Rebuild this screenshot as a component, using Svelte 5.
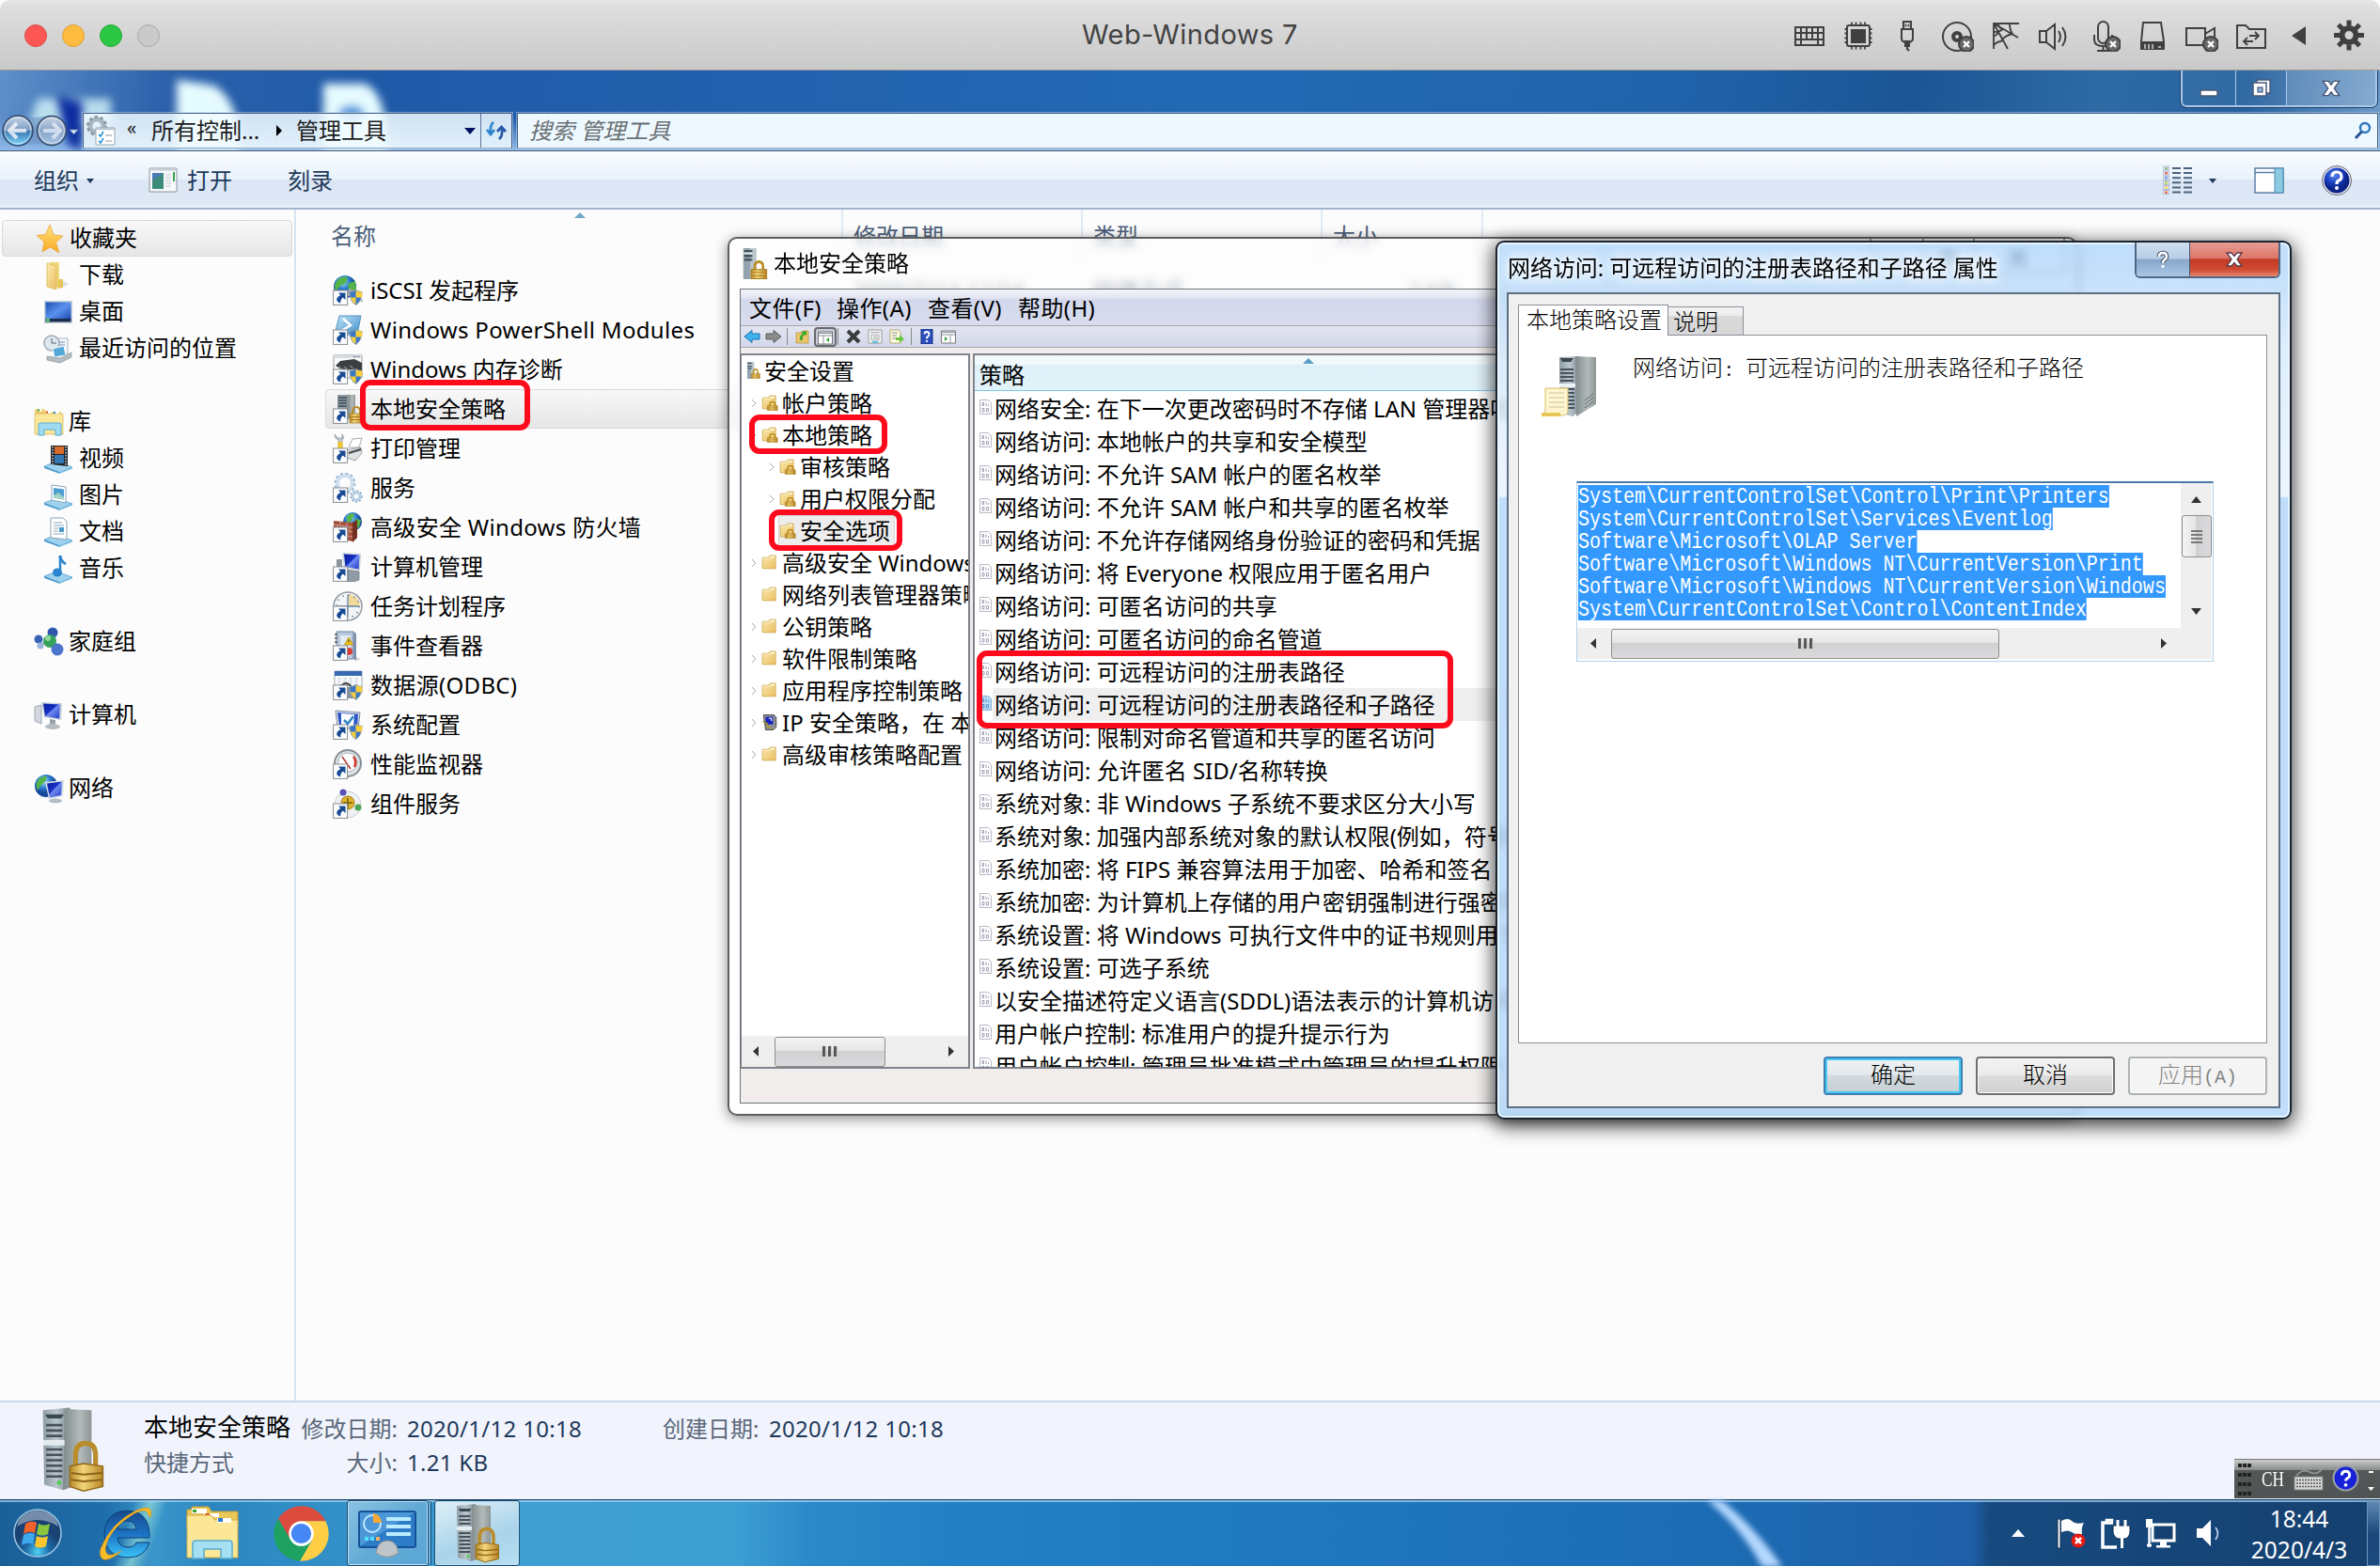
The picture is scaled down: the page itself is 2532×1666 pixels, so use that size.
<script>
  const macIcons = ['keyboard', 'chip', 'usb', 'disc', 'net', 'speaker', 'mic', 'disk', 'cam', 'share', 'tri', 'gear'];

  const nav = [
    { t: '收藏夹', i: 'star', root: true, sel: true },
    { t: '下载', i: 'download' },
    { t: '桌面', i: 'desktop' },
    { t: '最近访问的位置', i: 'recent' },
    null,
    { t: '库', i: 'library', root: true },
    { t: '视频', i: 'video' },
    { t: '图片', i: 'picture' },
    { t: '文档', i: 'document' },
    { t: '音乐', i: 'music' },
    null,
    { t: '家庭组', i: 'homegroup', root: true },
    null,
    { t: '计算机', i: 'computer', root: true },
    null,
    { t: '网络', i: 'network', root: true }
  ];

  const files = [
    { t: 'iSCSI 发起程序', i: 'globe', shield: true, d: '2009/7/14 12:54', k: '快捷方式', s: '2 KB' },
    { t: 'Windows PowerShell Modules', i: 'ps', shield: true, wide: true },
    { t: 'Windows 内存诊断', i: 'memory', shield: true },
    { t: '本地安全策略', i: 'secpol', sel: true },
    { t: '打印管理', i: 'print' },
    { t: '服务', i: 'gears' },
    { t: '高级安全 Windows 防火墙', i: 'firewall', wide: true },
    { t: '计算机管理', i: 'pcmanage' },
    { t: '任务计划程序', i: 'clock' },
    { t: '事件查看器', i: 'event' },
    { t: '数据源(ODBC)', i: 'odbc', shield: true, wide: true },
    { t: '系统配置', i: 'config', shield: true },
    { t: '性能监视器', i: 'perf' },
    { t: '组件服务', i: 'component' }
  ];

  const tree = [
    { t: '安全设置', i: 'server-lock', l: 0 },
    { t: '帐户策略', i: 'folder-lock', l: 1, a: true },
    { t: '本地策略', i: 'folder-lock', l: 1, a: true },
    { t: '审核策略', i: 'folder-lock', l: 2, a: true },
    { t: '用户权限分配', i: 'folder-lock', l: 2, a: true },
    { t: '安全选项', i: 'folder-lock', l: 2, sel: true },
    { t: '高级安全 Windows 防火墙', i: 'folder', l: 1, a: true },
    { t: '网络列表管理器策略', i: 'folder', l: 1 },
    { t: '公钥策略', i: 'folder', l: 1, a: true },
    { t: '软件限制策略', i: 'folder', l: 1, a: true },
    { t: '应用程序控制策略', i: 'folder', l: 1, a: true },
    { t: 'IP 安全策略，在 本地计算机', i: 'ipsec', l: 1, a: true },
    { t: '高级审核策略配置', i: 'folder', l: 1, a: true }
  ];

  const policies = [
    '网络安全: 在下一次更改密码时不存储 LAN 管理器哈希值',
    '网络访问: 本地帐户的共享和安全模型',
    '网络访问: 不允许 SAM 帐户的匿名枚举',
    '网络访问: 不允许 SAM 帐户和共享的匿名枚举',
    '网络访问: 不允许存储网络身份验证的密码和凭据',
    '网络访问: 将 Everyone 权限应用于匿名用户',
    '网络访问: 可匿名访问的共享',
    '网络访问: 可匿名访问的命名管道',
    '网络访问: 可远程访问的注册表路径',
    '网络访问: 可远程访问的注册表路径和子路径',
    '网络访问: 限制对命名管道和共享的匿名访问',
    '网络访问: 允许匿名 SID/名称转换',
    '系统对象: 非 Windows 子系统不要求区分大小写',
    '系统对象: 加强内部系统对象的默认权限(例如，符号链接)',
    '系统加密: 将 FIPS 兼容算法用于加密、哈希和签名',
    '系统加密: 为计算机上存储的用户密钥强制进行强密钥保护',
    '系统设置: 将 Windows 可执行文件中的证书规则用于软件',
    '系统设置: 可选子系统',
    '以安全描述符定义语言(SDDL)语法表示的计算机访问限制',
    '用户帐户控制: 标准用户的提升提示行为',
    '用户帐户控制: 管理员批准模式中管理员的提升权限'
  ];

  const paths = [
    'System\\CurrentControlSet\\Control\\Print\\Printers',
    'System\\CurrentControlSet\\Services\\Eventlog',
    'Software\\Microsoft\\OLAP Server',
    'Software\\Microsoft\\Windows NT\\CurrentVersion\\Print',
    'Software\\Microsoft\\Windows NT\\CurrentVersion\\Windows',
    'System\\CurrentControlSet\\Control\\ContentIndex'
  ];
</script>

{#snippet badge()}
  <circle cx="28" cy="28" r="8" fill="#6a6a6a" />
  <path d="M25 25l6 6M31 25l-6 6" stroke="#fff" stroke-width="2.4" />
{/snippet}

{#snippet macIcon(n)}
  <svg class="mi" viewBox="0 0 36 36" fill="none" stroke="#404040" stroke-width="2">
    {#if n === 'keyboard'}
      <path d="M3 10h30v19H3zM3 16h30M3 23h30M9 10v13M15 10v13M21 10v13M27 10v13M9 23v6M27 23v6" />
    {:else if n === 'chip'}
      <rect x="6" y="8" width="24" height="22" rx="2" /><rect x="11" y="13" width="14" height="13" fill="#404040" />
      <path d="M11 4.500v4M15.500 4.500v4M20.500 4.500v4M25 4.500v4M11 29.500v4M15.500 29.500v4M20.500 29.500v4M25 29.500v4M3.500 12h3M3.500 16.500h3M3.500 21.500h3M3.500 26h3M29.500 12h3M29.500 16.500h3M29.500 21.500h3M29.500 26h3" stroke-width="1.800" />
    {:else if n === 'usb'}
      <path d="M14 4h8v8h-8zM12 12h12v10q0 3-4 4v4h-4v-4q-4-1-4-4zM18 29v4l2 2" /><path d="M16.500 6.500v3M19.500 6.500v3" stroke-width="1.500" /><path d="M16 25h4v5h-4z" fill="#404040" />
    {:else if n === 'disc'}
      <circle cx="18" cy="20" r="15" /><circle cx="18" cy="20" r="4" stroke-width="4" />{@render badge()}
    {:else if n === 'net'}
      <path d="M5 33V6h27M5 6l26 15M5 6l15 27M10 6q0 5 5 6M15 12q-4 3-10 3M22 6q0 7 3 11M25 17q-9 2-12 8M13 25q-4 0-8 4M5 20q4-2 6-6" stroke-width="1.900" />
    {:else if n === 'speaker'}
      <path d="M2 14h7v12H2zM9 14l9-7v26l-9-7M22 14q4 6 0 12M26 10q7 10 0 20" />
    {:else if n === 'mic'}
      <rect x="12" y="4" width="11" height="23" rx="5.500" /><path d="M8 18v5q0 7 9.500 7t9.500-7v-5M17.500 30v4M11 35h13" />{@render badge()}
    {:else if n === 'disk'}
      <path d="M8 5h19l3 20v8H6v-8z" /><path d="M6 26h24v7H6z" fill="#404040" /><path d="M10 28v5M14 28v5M18 28v5M24 31h3" stroke="#d4d4d4" stroke-width="1.500" />
    {:else if n === 'cam'}
      <path d="M2 11h20v18H2zM22 17l10-6v18l-10-6" />{@render badge()}
    {:else if n === 'share'}
      <path d="M3 8h9l4 4h17v20H3z" /><path d="M16 19h10M22 15l4 4-4 4M20 25H10M14 21l-4 4 4 4" stroke-width="1.800" />
    {:else if n === 'tri'}
      <path d="M9 19L24 9v20z" fill="#404040" stroke="none" />
    {:else}
      <circle cx="18" cy="18.500" r="7.500" stroke-width="6" />
      <path d="M18 2.500v6M18 28.500v6M2 18.500h6M28 18.500h6M6.700 7.200l4.500 4.500M24.800 25.300l4.500 4.500M6.700 29.800l4.500-4.500M24.800 11.700l4.500-4.500" stroke-width="5" />
    {/if}
  </svg>
{/snippet}

{#snippet serverArt()}
  <path d="M3 1.500l10-1V29l-2.500 2L3.500 29z" fill="url(#front)" />
  <path d="M11 1l10 .5v26L10.500 31z" fill="url(#side)" />
  <path d="M4.200 7h6M4.200 9h6M4.200 11h6M4.200 16h6M4.200 18h6M4.200 20h6M4.200 22h6M4.200 24h6M4.200 26h6" stroke="#47525c" stroke-width=".9" />
  <path d="M3.800 3h7l-1 1.500h-5z" fill="#394650" /><path d="M3 12.500h8v2H3z" fill="#e4ecef" />
  <circle cx="9" cy="28.300" r=".8" fill="#4fd04f" />
{/snippet}

{#snippet lockArt()}
  <g transform="translate(-3.500 -.3)">
    <path d="M18.600 23v-4.500q0-4.500 3.700-4.500t3.700 4.500V24" fill="none" stroke="#b98d2c" stroke-width="1.800" />
    <path d="M16.500 22.500l5-1 7.200 1v7.500l-7.200 1.700-5-1.700z" fill="url(#lock)" stroke="#94691a" stroke-width=".5" />
    <path d="M17 25l4.500.6 7-.6M17 27.500l4.500.6 7-.6" stroke="#8d6418" fill="none" stroke-width=".7" />
  </g>
{/snippet}

{#snippet miniServer()}
  <path d="M2 0h9v32H2z" fill="#93a4ae" /><path d="M11 0h7v32h-7z" fill="#b9c5c9" /><path d="M3 3h10M3 8h10M3 12h10" stroke="#42515b" stroke-width="2.200" /><path d="M3 5.300h10" stroke="#e8f0f3" stroke-width="1.500" />
{/snippet}

{#snippet miniLock()}
  <path d="M16 23v-4q0-5 5-5t5 5v4" fill="none" stroke="#bd8c22" stroke-width="3" />
  <path d="M11.500 22h19v9.500h-19z" fill="url(#lock)" stroke="#a87817" /><path d="M12 25h18M12 28.500h18" stroke="#a97a1c" stroke-width=".9" />
{/snippet}

{#snippet stand()}
  <path d="M1 24l13-5 17 6-14 6z" fill="#9fd2ee" stroke="#5ba4cf" stroke-width=".8" /><path d="M1 24l16 6v1.800L1 26z" fill="#4b9bcb" /><path d="M31 25l-14 5.500v1.500l14-5.500z" fill="#79bce0" />
{/snippet}

{#snippet icon(n)}
  {#if n === 'star'}
    <path d="M16 1l4 11 10 1-7.500 7L26 31l-9.500-6L8 30l2-10.500L2 12.500l9.500-1z" fill="url(#star)" stroke="#e8a53c" stroke-width=".8" />
  {:else if n === 'download'}
    <path d="M7 2h10v27H7z" fill="#efd87c" /><path d="M4 3l10 3v25l-10-3z" fill="url(#fold)" stroke="#d9b954" stroke-width=".8" /><path d="M16 20h5v9l-5 1z" fill="#e6c65c" /><path d="M21 22l6 3-6 4z" fill="#ccc" opacity=".6" />
  {:else if n === 'desktop'}
    <path d="M1 4h30v24H1z" fill="#c3cfdd" /><path d="M2.500 5.500h27V24h-27z" fill="url(#screen)" /><path d="M2.500 23h27v3.500h-27z" fill="#1c2c50" /><circle cx="5" cy="24.500" r="2" fill="#5fc36c" />
  {:else if n === 'recent'}
    <path d="M12 5h14v16H12z" fill="#f5f7fa" stroke="#a8b4c0" /><path d="M15 9h8M15 12h8" stroke="#6d8dae" /><circle cx="9" cy="10" r="8" fill="#dfe8ee" stroke="#9caab5" stroke-width="1.500" /><path d="M9 5v5h5" stroke="#567" fill="none" />
    <path d="M10 16l12-3 2 10-12 2z" fill="#53a7d9" stroke="#fff" /><path d="M4 24l14 2 12-6v5l-12 6-14-3z" fill="#b4bcc2" stroke="#8b949b" stroke-width=".7" />
  {:else if n === 'library'}
    <path d="M1 4q0-2 2-2h8l2 3h16v22H1z" fill="#eccf6c" /><path d="M3 7h27q1 0 1 1v21H1V7z" fill="#fbe79a" stroke="#d4b04a" stroke-width=".7" /><path d="M4 3.500h5M13 5.500h6M21 6h6" stroke="#fff" stroke-width="2" /><path d="M4 3.500h2" stroke="#26a243" stroke-width="2" /><path d="M13 5.500h2" stroke="#e04a20" stroke-width="2" /><path d="M21 6h2" stroke="#2a7fd6" stroke-width="2" />
    <path d="M5 30V19q0-2 2-2h20q2 0 2 2v11h-6v-6H11v6z" fill="#9fdcf3" stroke="#58adcf" />
  {:else if n === 'video'}
    {@render stand()}<path d="M8 2h18v22l-18-2z" fill="#20262b" /><path d="M12 3h10v8H12z" fill="#d86a2b" /><path d="M12 12h10v9H12z" fill="#3475b4" /><path d="M10 3v19M24 3v20" stroke="#ddd" stroke-width="1.500" stroke-dasharray="1.500 1.500" />
  {:else if n === 'picture'}
    {@render stand()}<path d="M9 5l15 2v17L9 21z" fill="#fff" stroke="#86a7bd" /><path d="M11 8l11 1.500v11L11 18.500z" fill="#4b9cd3" /><path d="M11 16l5-3 6 5v2.500l-11-2z" fill="#9fd3c2" />
  {:else if n === 'document'}
    {@render stand()}<path d="M8 1h13l4 4v19L8 22z" fill="#fff" stroke="#8fa3b3" /><path d="M11 6h9M11 9h11M11 12h5M11 15h5M11 18h11" stroke="#8aa5bb" /><path d="M17 11h5v5h-5z" fill="#4a96cd" />
  {:else if n === 'music'}
    {@render stand()}<path d="M18 2v18" stroke="#2d86cd" stroke-width="2.500" /><path d="M18 2q0 6 6 9" stroke="#2d86cd" stroke-width="3" fill="none" /><ellipse cx="15" cy="20" rx="5" ry="4.500" fill="#2d86cd" />
  {:else if n === 'homegroup'}
    <path d="M4 16l4 4 9-4zM17 6l9 16-8-6z" fill="#a8c4e4" /><circle cx="5" cy="13" r="4.500" fill="#3862b4" /><circle cx="20" cy="6" r="5.500" fill="#2f57b0" /><circle cx="7" cy="20" r="3.500" fill="#9db4df" /><circle cx="17" cy="15" r="7" fill="#35a05a" /><circle cx="15" cy="12" r="3" fill="#8fdb9f" /><circle cx="25" cy="24" r="6.500" fill="#4b74cc" />
  {:else if n === 'computer'}
    <path d="M1 7l7-2v20l-7-3z" fill="#d3d9de" stroke="#8d97a1" stroke-width=".8" /><path d="M8 2l22 1-1 18-18-3z" fill="#c7d1dc" /><path d="M10 3.500l18 1-1 15-15-2.500z" fill="url(#mon)" /><path d="M17 20l6 1v6h-6z" fill="#98a2ab" /><ellipse cx="20" cy="28" rx="8" ry="3" fill="#b6bec5" />
  {:else if n === 'pcmanage'}
    <path d="M4 8h6v10H4z" fill="#8d97a1" /><path d="M10 1l20 1-1 18-17-3z" fill="#c7d1dc" /><path d="M12 2.500l16.500 1-1 15-14-2.500z" fill="url(#mon)" /><path d="M16 19l12 2v9l-6 2h-6z" fill="#8f9ca6" stroke="#6b767f" stroke-width=".7" />
  {:else if n === 'network'}
    <circle cx="13" cy="13" r="12" fill="url(#globe)" /><path d="M5 6q5-4 9-3l-2 5-5 5-3 5q-3-7 1-12zM15 12l8-3 1 8-6 3z" fill="#55b548" /><path d="M12 9l20-2-1 17-15 3z" fill="#d5dde5" /><path d="M14 10.500l16-2-1 14.500-12 2.500z" fill="url(#mon)" /><ellipse cx="23" cy="29" rx="7" ry="2.500" fill="#b6bec5" />
  {:else if n === 'globe'}
    <circle cx="13" cy="12" r="12" fill="url(#globe)" /><path d="M7 3q7-3 9-1l-2 6-6 3-5 6q-3-8 4-14zM16 9l8-3 1 9-7 5z" fill="#55b548" /><path d="M13 17l5-3 8 3v5H13z" fill="#9aa7b0" /><path d="M21 20q8 0 10 8" stroke="#aab4bc" stroke-width="2" fill="none" />
  {:else if n === 'ps'}
    <path d="M7 1h23l-4 20H2z" fill="url(#psg)" stroke="#4f93c5" /><path d="M11 4l8 7-10 6" stroke="#fff" stroke-width="2.500" fill="none" />
  {:else if n === 'memory'}
    <path d="M1 1h30v24H1z" fill="#fafafa" stroke="#999" /><path d="M1 2.500h30" stroke="#d6dde3" stroke-width="3" /><path d="M22 2.500h7" stroke="#667" stroke-dasharray="1.500 1" /><path d="M3 12l5-5 15-2 8 4v8l-3 1-4-2-14 1z" fill="#3c3f42" /><path d="M6 13l4 3M12 13l4 3M18 12l4 3" stroke="#85898c" stroke-width="1.500" />
  {:else if n === 'secpol'}
    <path d="M5 1h11v20H5z" fill="#8e9ca5" /><path d="M16 1h8v24l-8 2z" fill="url(#side)" /><path d="M6 4h9M6 7h9M6 10h9M6 13h9" stroke="#3f4c56" stroke-width="1.300" /><path d="M21 22v-3q0-5 4-5t4 5v3" fill="none" stroke="#bd8c22" stroke-width="2" /><path d="M18 21h13v10H18z" fill="url(#lock)" stroke="#a87817" stroke-width=".7" /><path d="M18 24.500h13M18 27.500h13" stroke="#a97a1c" />
  {:else if n === 'print'}
    <path d="M2 1q0 5 4 6v12h4V7q3-2 0-6v4H5.500z" fill="#c6ccd1" stroke="#81898f" stroke-width=".7" /><path d="M5.500 9h5v8h-5z" fill="#efc52d" /><path d="M17 15l4-9 10-1-3 10z" fill="#fff" stroke="#aaa" /><path d="M13 18l17-3 1 6-7 8-12-4z" fill="#e0e3e5" stroke="#888f95" stroke-width=".8" /><path d="M17 21l13-4" stroke="#444" stroke-width="2" />
  {:else if n === 'gears'}
    <circle cx="13" cy="11" r="8" fill="none" stroke="#cfdfed" stroke-width="4" /><circle cx="13" cy="11" r="10.500" fill="none" stroke="#9bbbd6" stroke-width="2" stroke-dasharray="3 2.500" /><circle cx="25" cy="25" r="4" fill="none" stroke="#b9d0e3" stroke-width="3" /><circle cx="25" cy="25" r="6" fill="none" stroke="#86aac8" stroke-width="1.500" stroke-dasharray="2 2" />
  {:else if n === 'firewall'}
    <circle cx="21" cy="10" r="10" fill="url(#globe)" /><path d="M15 4q5-4 8-2l-3 7-5 3zM24 7l6 1-2 8-5 1z" fill="#55b548" /><path d="M1 9l20 2v20l-20-4z" fill="#a4503c" /><path d="M21 11l5-3v19l-5 5z" fill="#74301f" /><path d="M1 13l20 3M1 18l20 3M1 23l20 3M8 10v4M15 11v4M5 14v5M12 15v5M18 16v5M16 21v5" stroke="#d69f90" stroke-width=".9" />
  {:else if n === 'clock'}
    <circle cx="16" cy="16" r="15" fill="#f3f5f7" stroke="#949ca3" stroke-width="1.500" /><path d="M16 16V3a13 13 0 0 1 13 13z" fill="#f2d999" /><circle cx="16" cy="16" r="12" fill="none" stroke="#8598a8" stroke-dasharray="1.500 4.780" stroke-width="2" /><path d="M16 4v24M4 16h24" fill="none" stroke="#5d86ad" stroke-width="1.300" />
  {:else if n === 'event'}
    <path d="M4 1h18v29H4z" fill="#b9c8dc" stroke="#6f83a0" /><path d="M22 1l3 2v29l-3-2z" fill="#7e92af" /><path d="M8 5h11v22H8z" fill="#e3eaf3" /><path d="M17 7l4.500 8h-9z" fill="#f5c816" stroke="#a98309" stroke-width=".7" /><path d="M17 9.500v3" stroke="#333" /><circle cx="17" cy="22" r="4" fill="#dc3a31" /><path d="M5 4H2M5 8H2M5 12H2" stroke="#555" stroke-width="1.500" /><path d="M25 28l5 2-5 2z" fill="#bbb" opacity=".6" />
  {:else if n === 'odbc'}
    <path d="M2 1h29v23H2z" fill="#fbfcfd" stroke="#9aa6b3" /><path d="M2 1h29v5H2z" fill="#3769b3" /><path d="M5 9h23M5 12h23M5 15h23" stroke="#b7bfc9" stroke-dasharray="4 2" /><path d="M8 18q6-8 12 0" fill="none" stroke="#444" stroke-width="2" /><path d="M12 18h12v12H12z" fill="#8794a0" />
  {:else if n === 'config'}
    <path d="M3 1l26 2-2 18-22-2z" fill="#dbe1e8" stroke="#7d8b9b" /><path d="M5 3l22 1.500-1 14-19-1z" fill="#2d54c8" /><path d="M9 4l14 1-1 13H9z" fill="#fff" /><path d="M12 11l4 4 6-8" stroke="#2c86c8" stroke-width="2.500" fill="none" />
  {:else if n === 'perf'}
    <circle cx="16" cy="15" r="14" fill="#dfe3e6" stroke="#858e95" stroke-width="2" /><circle cx="16" cy="14" r="10" fill="#fff" stroke="#a9b1b7" /><path d="M10 8l9 13" stroke="#b9342a" stroke-width="1.500" /><path d="M22 8q4 5 1 11" stroke="#d2342a" stroke-width="2.500" fill="none" />
  {:else if n === 'component'}
    <ellipse cx="16" cy="17" rx="14" ry="14" fill="#f0f1f2" stroke="#c8cdd1" /><circle cx="11" cy="4" r="3.500" fill="#5752b8" /><circle cx="16" cy="15" r="7" fill="#dfb52c" stroke="#9f7a10" /><path d="M16 10v10M11 15h10" stroke="#775908" stroke-width="1.500" /><circle cx="27" cy="20" r="3.500" fill="#4aa457" />
  {:else if n === 'server-lock'}
    {@render miniServer()}{@render miniLock()}
  {:else if n === 'folder' || n === 'folder-lock'}
    <path d="M2 6h11l3-4h11v26H2z" fill="url(#fold)" stroke="#cfa349" stroke-width="1.400" /><path d="M17 5h8" stroke="#fff" stroke-width="2.500" /><path d="M3 8h13l2-2" fill="none" stroke="#fff6d8" stroke-width="1.200" />
    {#if n === 'folder-lock'}{@render miniLock()}{/if}
  {:else if n === 'ipsec'}
    <path d="M4 1h20l4 5v20l-6 5H8z" fill="#8f9196" stroke="#333" stroke-width="1.500" /><path d="M8 5h14v15H8z" fill="#1424c0" /><path d="M2 14l10 4-2 3 12 9-13-7 2-3z" fill="#f4e229" stroke="#8d820c" /><path d="M14 8h5v5" stroke="#fff" stroke-width="2" fill="none" />
  {/if}
{/snippet}

{#snippet policyIcon(active)}
  <svg class="pi" viewBox="0 0 13 16"><path d="M.5.500h9l3 3v12H.500z" fill={active ? '#b9dbf6' : '#fdfdfd'} stroke={active ? '#7fb0d8' : '#b7b9c6'} /><path d="M3 3.500h1.500v3H3zM7 3.500v3.500M3 9.500h2v3.500H3zM7.500 9.500h2V13h-2zM9.500 5v2" fill="none" stroke={active ? '#4d86c0' : '#9a9cb2'} stroke-width=".9" /></svg>
{/snippet}

<svg class="defs" width="0" height="0">
  <defs>
    <linearGradient id="front"><stop stop-color="#8e9ca5" /><stop offset=".5" stop-color="#b9c6cc" /><stop offset="1" stop-color="#7c8991" /></linearGradient>
    <linearGradient id="side"><stop stop-color="#808a8c" /><stop offset=".6" stop-color="#b3bbba" /><stop offset="1" stop-color="#8d9596" /></linearGradient>
    <linearGradient id="lock"><stop stop-color="#b98a2b" /><stop offset=".4" stop-color="#f3d67c" /><stop offset="1" stop-color="#b78625" /></linearGradient>
    <linearGradient id="star" x2="0" y2="1"><stop stop-color="#ffe680" /><stop offset="1" stop-color="#f9a71e" /></linearGradient>
    <linearGradient id="screen" x2="1" y2="1"><stop stop-color="#1f4fb4" /><stop offset=".5" stop-color="#5b92ee" /><stop offset="1" stop-color="#1c47b2" /></linearGradient>
    <linearGradient id="mon" x2="1" y2="1"><stop stop-color="#0a1d9e" /><stop offset=".45" stop-color="#1730c4" /><stop offset=".5" stop-color="#6f8cf0" /><stop offset="1" stop-color="#2139c8" /></linearGradient>
    <radialGradient id="globe" cx=".4" cy=".3"><stop stop-color="#aee0fa" /><stop offset=".6" stop-color="#2d7fce" /><stop offset="1" stop-color="#15479a" /></radialGradient>
    <linearGradient id="psg" x2="1" y2="1"><stop stop-color="#c5e6f8" /><stop offset="1" stop-color="#3a8cc9" /></linearGradient>
    <linearGradient id="fold" x2="1" y2="1"><stop stop-color="#fdeab0" /><stop offset="1" stop-color="#e8bf62" /></linearGradient>
    <radialGradient id="help" cx=".4" cy=".3"><stop stop-color="#5f8cf0" /><stop offset=".6" stop-color="#1a3fc0" /><stop offset="1" stop-color="#0c2388" /></radialGradient>
    <radialGradient id="orb" cx=".5" cy=".9"><stop stop-color="#4fd3f5" /><stop offset=".5" stop-color="#1f6ca8" /><stop offset="1" stop-color="#1a4272" /></radialGradient>
    <linearGradient id="navb" x2="0" y2="1"><stop stop-color="#c3d4e6" /><stop offset=".48" stop-color="#7f9fc4" /><stop offset=".52" stop-color="#3c78b4" /><stop offset="1" stop-color="#7ed8fa" /></linearGradient>
    <linearGradient id="navf" x2="0" y2="1"><stop stop-color="#c8d4e4" /><stop offset=".5" stop-color="#8aa5c8" /><stop offset="1" stop-color="#a9c4e4" /></linearGradient>
    <linearGradient id="ie" x2="0" y2="1"><stop stop-color="#174a8c" /><stop offset=".5" stop-color="#1b73c4" /><stop offset="1" stop-color="#3cc3f8" /></linearGradient>
  </defs>
</svg>

<div class="screen">
  <header class="mac">
    <div class="lights"><i class="r"></i><i class="y"></i><i class="g"></i><i class="n"></i></div>
    <h1>Web-Windows 7</h1>
    <div class="mac-icons">{#each macIcons as n}{@render macIcon(n)}{/each}</div>
  </header>

  <section class="glass">
    <svg class="aero" viewBox="0 0 560 86">
      <path d="M40 30h78v30H30z" fill="#dff" opacity=".75" /><path d="M60 28l28 6-2 52-14-8z" fill="#0d2da0" />
      <path d="M188 10l40 6q28 18 26 70h-66z" fill="#e6fbff" /><path d="M344 14h44q24 10 24 72h-68z" fill="#e6fbff" /><ellipse cx="374" cy="46" rx="13" ry="8" fill="#5590d8" />
    </svg>
    <div class="caption">
      <div class="winbtns">
        <span class="b1"><svg viewBox="0 0 22 10"><rect x="2" y="2" width="18" height="6" rx="1" fill="#fff" stroke="#4a5a7a" stroke-width="1.500" /></svg></span>
        <span class="b2"><svg viewBox="0 0 22 22"><rect x="6" y="2" width="14" height="14" fill="#fff" stroke="#4a5a7a" stroke-width="1.500" /><rect x="2" y="5" width="14" height="14" fill="#fff" stroke="#4a5a7a" stroke-width="1.500" /><rect x="7" y="10" width="5" height="5" fill="#8fb6e0" stroke="#4a5a7a" stroke-width="1.200" /></svg></span>
        <span class="b3"><svg viewBox="0 0 22 18"><path d="M3 2h5.500l2.500 3.500L13.500 2H19l-5 7 5 7h-5.500L11 12.500 8.500 16H3l5-7z" fill="#fff" stroke="#4a5a7a" stroke-width="1.300" /></svg></span>
      </div>
    </div>
    <div class="addrrow">
      <svg class="navs" viewBox="0 0 88 38">
        <path d="M19 2q17 6 35 0l4 34q-20-6-39 0z" fill="#7095c4" opacity=".6" />
        <circle cx="19" cy="19" r="16" fill="url(#navb)" stroke="#34496a" stroke-width="1.500" /><circle cx="19" cy="19" r="14" fill="none" stroke="#fff" opacity=".6" />
        <circle cx="55" cy="19" r="15.500" fill="url(#navf)" stroke="#34496a" stroke-width="1.500" /><circle cx="55" cy="19" r="13.500" fill="none" stroke="#fff" opacity=".6" />
        <g opacity=".75"><path d="M28 19H12M18 11l-8 8 8 8" stroke="#fff" stroke-width="4" fill="none" /><path d="M46 19h16M56 11l8 8-8 8" stroke="#e6eefa" stroke-width="4" fill="none" /></g>
        <path d="M74 18h9l-4.500 5z" fill="#dce9f8" stroke="#5b7cab" stroke-width=".8" />
      </svg>
      <div class="addr">
        <svg class="aicon" viewBox="0 0 32 32"><circle cx="11" cy="11" r="7" fill="none" stroke="#a9b6c1" stroke-width="5" /><circle cx="11" cy="11" r="9.500" fill="none" stroke="#8e9ba6" stroke-width="3" stroke-dasharray="3.500 2.500" /><path d="M10 13h20v18H10z" fill="#fff" stroke="#9aa5ad" /><path d="M10 14h20" stroke="#b8c6d2" stroke-width="2.500" /><path d="M13 20l2 2 3-5M13 27l2 2 3-5" stroke="#1c8fd0" stroke-width="1.500" fill="none" /><path d="M20 21h7M20 27h7" stroke="#999" /></svg>
        <span class="chev">«</span><span class="p1">所有控制...</span>
        <svg class="sep" viewBox="0 0 8 12"><path d="M1 0l6 6-6 6z" /></svg>
        <span>管理工具</span>
        <svg class="drop" viewBox="0 0 12 7"><path d="M0 0h12L6 7z" fill="#001060" /></svg>
        <div class="refresh"><svg viewBox="0 0 24 24"><path d="M9 3q-4 3-3 12M2 11l4 5 4-5" fill="none" stroke="#2b86cf" stroke-width="2.800" /><path d="M15 21q4-3 3-12M13 13l4.500-5 4.500 5" fill="none" stroke="#2758a8" stroke-width="2.800" /></svg></div>
      </div>
      <div class="search"><em>搜索 管理工具</em><svg viewBox="0 0 20 20"><circle cx="12" cy="7" r="5" fill="#eaf5ff" stroke="#2f78c0" stroke-width="2.400" /><path d="M8.500 11L2 18" stroke="#2a4f94" stroke-width="3" /></svg></div>
    </div>
  </section>

  <nav class="toolbar">
    <span class="org">组织</span><svg class="tiny" viewBox="0 0 8 5"><path d="M0 0h8L4 5z" fill="#1e395b" /></svg>
    <svg class="openi" viewBox="0 0 32 28"><path d="M1 1h29v25H1z" fill="#f6f8f9" stroke="#8a949c" /><path d="M1 2h29" stroke="#c5cdd4" stroke-width="3" /><path d="M4 6h12v17H4z" fill="#3d8b7b" /><path d="M4 6h12l-12 8z" fill="#4a7bb5" /><path d="M18 8h6M18 11h6M18 14h6M18 17h6M18 20h6" stroke="#c3c9cd" /><path d="M27 5v10" stroke="#3aa34c" stroke-width="2" /></svg>
    <span class="open">打开</span><span class="burn">刻录</span>
    <svg class="views" viewBox="0 0 32 32">
      {#each ['#6cae68', '#e8412b', '#3f90e4', '#9bc81f', '#edcf27', '#e8412b'] as c, i}
        <rect x=".8" y={1 + i * 5.1} width="5.500" height="4" fill="#fff" stroke="#9aa8c0" stroke-width=".8" /><rect x="2.300" y={2 + i * 5.1} width="2.500" height="2.200" fill={c} /><path d={`M10 ${3 + i * 5.1}h9M22 ${3 + i * 5.1}h9`} stroke="#4b637c" stroke-width="2" />
      {/each}
    </svg>
    <svg class="tiny v" viewBox="0 0 8 5"><path d="M0 0h8L4 5z" fill="#1e395b" /></svg>
    <svg class="pane" viewBox="0 0 32 28"><rect x="1" y="1" width="30" height="26" fill="#fff" stroke="#5b7fa5" stroke-width="1.500" /><path d="M22 1h9v26h-9z" fill="#8bcae0" stroke="#4d8db5" /><path d="M1 5.500h21" stroke="#5b7fa5" stroke-width="1.500" /></svg>
    <svg class="helpi" viewBox="0 0 32 32"><circle cx="16" cy="16" r="14.500" fill="url(#help)" stroke="#e7e9ee" stroke-width="2" /><circle cx="16" cy="16" r="15.500" fill="none" stroke="#667" /><path d="M11 12q0-5 5-5t5 5q0 3-3 4-2 1-2 4" stroke="#fff" stroke-width="3.200" fill="none" /><circle cx="16" cy="24" r="2" fill="#fff" /></svg>
  </nav>

  <main class="content">
    <aside class="side">
      {#each nav as n}
        {#if n}
          <div class="nrow" class:root={n.root} class:sel={n.sel}><svg viewBox="0 0 32 32">{@render icon(n.i)}</svg><span>{n.t}</span></div>
        {:else}<div class="nrow"></div>{/if}
      {/each}
    </aside>
    <section class="list">
      <div class="thead"><span class="c0">名称<svg viewBox="0 0 12 6"><path d="M6 0l6 6H0z" fill="#6fa9c9" /></svg></span><span class="c">修改日期</span><span class="c">类型</span><span class="c c4">大小</span><span class="c"></span></div>
      {#each files as f}
        <div class="frow" class:sel={f.sel}>
          <svg class="ficon" viewBox="0 0 32 32">
            {@render icon(f.i)}
            <rect x=".6" y="16" width="15" height="15.400" fill="#fff" stroke="#858b91" /><path d="M6 18.500h7.500V26l-2.700-2.600q-3 2-2.500 6.200-4.500-1.200-4-4.800.5-2.500 4-3.900z" fill="#174a94" />
            {#if f.shield}<path d="M18 17.500q4 0 6.500-2 2.500 2 6.500 2 0 10-6.500 14-6.500-4-6.500-14z" fill="#3877c8" stroke="#8b9aa9" /><path d="M24.500 16v7.500H31q.5-3 .3-6-4 0-6.800-1.500zM24.500 23.500V31q-4-2.500-5.800-7.500z" fill="#f7cf3d" />{/if}
          </svg>
          <span class="fname" class:wide={f.wide}>{f.t}</span>
          {#if f.d}<span class="fd">{f.d}</span><span class="fk">{f.k}</span><span class="fs">{f.s}</span>{/if}
        </div>
      {/each}
    </section>
  </main>

  <footer class="details">
    <svg class="big" viewBox="0 0 32 32">{@render serverArt()}{@render lockArt()}</svg>
    <div class="dc d1"><b>本地安全策略</b><span class="lab">快捷方式</span></div>
    <div class="dc d2"><span class="lab">修改日期:</span><span class="lab">大小:</span></div>
    <div class="dc d3"><span>2020/1/12 10:18</span><span>1.21 KB</span></div>
    <div class="dc d4"><span class="lab">创建日期:</span></div>
    <div class="dc d5"><span>2020/1/12 10:18</span></div>
  </footer>

  <footer class="task">
    <svg class="streak" viewBox="0 0 400 71" preserveAspectRatio="none"><path d="M192 -5h16q40 30 74 80h-22q-26-50-68-80z" fill="#b5d8ff" /></svg>
    <svg class="orb" viewBox="0 0 54 54"><circle cx="27" cy="27" r="25" fill="url(#orb)" stroke="#9ac7e6" stroke-width="1.500" /><path d="M5 20q22-14 44 0Q46 4 27 3 9 4 5 20z" fill="#fff" opacity=".4" />
      <path d="M14 17q6-4 12-1l-2 11q-6-3-12 1z" fill="#f0622a" /><path d="M28 17q6 3 12 0l-2 11q-6 3-12 0z" fill="#8bc63f" /><path d="M12 29q6-4 12-1l-2 11q-6-3-12 1z" fill="#3fa9f0" /><path d="M26 30q6 3 12 0l-2 11q-6 3-12 0z" fill="#fdc62c" /></svg>
    <svg class="iei" viewBox="0 0 62 62"><path d="M57 36H23q1 10 11 10 7 0 9-5h14q-5 16-23 16Q10 56 9 33 10 8 33 7q25 1 24 29zM23 27h20q-1-9-10-9t-10 9z" fill="url(#ie)" stroke="#0e3d75" /><path d="M58 14Q62-1 43 7 16 20 5 48q-3 18 16 7 3-2 6-5-17 10-17-3Q14 26 41 10q14-7 15 2z" fill="#f8bd28" stroke="#d8941a" stroke-width=".8" /></svg>
    <svg class="exi" viewBox="0 0 58 58"><path d="M2 4h5V1h18l3 5h28v14H2z" fill="#e8c658" stroke="#c69c33" /><path d="M7 3h16v5H7z" fill="#fff" /><path d="M8 4h4v3H8z" fill="#35a52e" /><path d="M20 8h16v4H20z" fill="#fff" /><path d="M21 8h5v4h-5z" fill="#e3501c" /><path d="M2 10h26l3 5h25v40H2z" fill="#fbe795" stroke="#d4b04a" /><path d="M34 13h15v5H34z" fill="#fff" /><path d="M35 13h5v4h-5z" fill="#2f7bd0" /><path d="M8 56V40q0-3 3-3h36q3 0 3 3v16H38V46H20v10z" fill="#a6dff2" stroke="#58adcf" stroke-width="1.500" /></svg>
    <svg class="chi" viewBox="1 1 46 46"><path d="M5.540 12.030A22 22 0 0 1 43.600 14H24l-8.660 15z" fill="#dd4b3e" /><path d="M43.600 14A22 22 0 0 1 22.860 45.970L32.660 29 24 14z" fill="#ffce44" /><path d="M22.860 45.970A22 22 0 0 1 5.540 12.030L15.340 29h17.320z" fill="#1da261" /><circle cx="24" cy="24" r="10" fill="#fff" /><circle cx="24" cy="24" r="8" fill="#4587f4" /></svg>
    <div class="tb t1"><svg viewBox="0 0 64 56"><rect x="1" y="5" width="60" height="38" rx="2" fill="#2d7cc8" stroke="#155299" stroke-width="2" /><path d="M2 6h58L2 42z" fill="#6bb2e8" opacity=".5" /><circle cx="15" cy="18" r="9" fill="none" stroke="#bfe8ff" stroke-width="2" /><path d="M16 17V7q8 1 9 10z" fill="#f8a936" /><path d="M30 13h26M30 21h26M30 29h26" stroke="#b9ecff" stroke-width="4" /><path d="M7 34h4M13 34h4" stroke="#4ee0ff" stroke-width="4" /><path d="M19 34h4" stroke="#f0b060" stroke-width="4" /><path d="M19 49q2-13 12-13t12 13q-12 9-24 0z" fill="#bfc4c8" stroke="#8b9196" /></svg></div>
    <div class="tb t2"><svg viewBox="0 0 32 32">{@render serverArt()}{@render lockArt()}</svg></div>
    <div class="tray">
      <svg class="up" viewBox="0 0 16 10"><path d="M8 1l7 8H1z" fill="#fff" /></svg>
      <svg viewBox="0 0 34 34"><path d="M4 2h3v31H4z" fill="#fff" stroke="#0e2a4d" /><path d="M8 4q7-4 11 0t13 2q-3 5-2 12-7 1-11-2t-11 0z" fill="#fff" /><circle cx="26" cy="25" r="7.500" fill="#e51a12" /><path d="M23 22l6 6M29 22l-6 6" stroke="#fff" stroke-width="2.500" /></svg>
      <svg viewBox="0 0 34 34" fill="none" stroke="#fff" stroke-width="2.500"><path d="M15 6H4v26h15" stroke-width="3.500" /><path d="M8 6V3h6v3" /><path d="M15 9h18v7q-1 6-5 7h-7q-5-1-6-7z" fill="#fff" stroke="#0e2a4d" stroke-width="1" /><path d="M20 3v7M28 3v7M24.500 21v12" stroke-width="3" /></svg>
      <svg viewBox="0 0 34 34"><path d="M5.500 9v23M3 30h5" stroke="#fff" stroke-width="2.500" /><rect x="2" y="2" width="7" height="9" fill="#fff" /><rect x="9" y="8" width="23" height="17" fill="#15406f" stroke="#fff" stroke-width="3" /><path d="M17 26h7v4h4v2.500H13V30h4z" fill="#fff" /></svg>
      <svg viewBox="0 0 34 34"><path d="M4 12h6l9-9v28l-9-9H4z" fill="#fff" /><path d="M24 11q5 6 0 13" stroke="#cfe0f4" fill="none" stroke-width="1.500" /></svg>
      <div class="clk"><span>18:44</span><span>2020/4/3</span></div>
      <i class="show"></i>
    </div>
  </footer>

  <div class="ime">
    <i class="dots"></i><span>CH</span>
    <svg class="kb" viewBox="0 0 32 24"><path d="M3 8q6-8 14-4T30 1" fill="none" stroke="#9a9c9c" stroke-width="1.500" /><rect x="1" y="9" width="30" height="14" fill="#d8dada" stroke="#7f8282" /><path d="M3 12.500h26M3 16h26M3 19.500h26" stroke="#555" stroke-width="1.600" stroke-dasharray="2 1" /></svg>
    <svg class="q" viewBox="0 0 28 28"><circle cx="14" cy="14" r="12.500" fill="#1722d8" stroke="#9aa0a8" stroke-width="2" /><path d="M10 11q0-4 4-4t4 4q0 2-2 3t-2 3" stroke="#fff" stroke-width="2.800" fill="none" /><circle cx="14" cy="21" r="1.800" fill="#fff" /></svg>
    <svg class="m" viewBox="0 0 8 26"><path d="M1 3h5v2H1zM0 20h7l-3.500 4z" fill="#fff" /></svg>
  </div>

  <div class="red ra"></div>

  <section class="mmc">
    <div class="mtitle">
      <svg class="mlogo" viewBox="0 0 32 32" preserveAspectRatio="none">{@render miniServer()}{@render miniLock()}</svg><span>本地安全策略</span>
      <svg class="mbtn" viewBox="0 0 208 38"><path d="M1 0v32q0 5 5 5h196q5 0 5-5V0M57 0v37M111 0v37" fill="none" stroke="#777" stroke-width="1.500" /><path d="M20 24h18v5H20zM74 12h18v16H74zM80 17h6v6h-6z" fill="#555" fill-rule="evenodd" /><path d="M150 12l16 16M166 12l-16 16" stroke="#333" stroke-width="6" /></svg>
    </div>
    <div class="mclient">
      <div class="menu"><span>文件(F)</span><span>操作(A)</span><span>查看(V)</span><span>帮助(H)</span></div>
      <div class="mtools">
        <svg class="ar" viewBox="0 0 18 16"><path d="M1 8l8-6.500V5h8v6H9v3.500z" fill="#3fb3ee" stroke="#1f6fae" /></svg>
        <svg class="ar" viewBox="0 0 18 16"><path d="M17 8L9 1.500V5H1v6h8v3.500z" fill="#8b8b8b" stroke="#5d5d5d" /></svg>
        <i></i>
        <svg class="g3" viewBox="0 0 16 16"><path d="M1 4h6l1-2h6v13H1z" fill="#eac36b" stroke="#b98f33" stroke-width=".7" /><path d="M5 12q-1-5 3-7L6 3l6-1v5l-2-1q-3 2-2 6z" fill="#3fa82c" /></svg>
        <span class="press"><svg viewBox="0 0 16 16"><path d="M.5 2h15v13H.5z" fill="#fff" stroke="#777" /><path d="M1 3.500h14M1 6h14M6 6v9" stroke="#8a9098" /><path d="M12 8v5l-3-2.500z" fill="#2f9c33" /></svg></span>
        <i class="gn"></i>
        <svg class="g3" viewBox="0 0 16 16"><path d="M2 2l12 12M14 2L2 14" stroke="#3a3a3a" stroke-width="4" /></svg>
        <svg class="g2" viewBox="0 0 16 16"><path d="M1 1h14v14H1z" fill="#f8f8f8" stroke="#9a9a9a" /><path d="M3 3.500h10M4 6h8v6H4zM6 8h5M6 10h5" stroke="#a4a8ac" fill="none" /><path d="M5 14h6" stroke="#34b7e0" stroke-width="1.500" /></svg>
        <svg class="g2" viewBox="0 0 16 16"><path d="M1 1h9l2 2v12H1z" fill="#fffbe0" stroke="#b5a973" /><path d="M3 4h6M3 7h5M3 10h4" stroke="#888" /><path d="M7 9h4V6l5 4.500-5 4.500v-3H7z" fill="#6cc644" /></svg>
        <i class="g2"></i>
        <svg class="g3" viewBox="0 0 16 16"><path d="M2 0h12v16H2z" fill="#2b4fbd" stroke="#152c78" /><path d="M5.500 5.500Q5.500 3 8 3t2.500 2.500Q10.500 7 8 9v1.500M8 12v2" stroke="#fff" stroke-width="1.800" fill="none" /></svg>
        <svg class="g2" viewBox="0 0 16 16"><path d="M.5 2h15v13H.5z" fill="#fff" stroke="#777" /><path d="M1 3.500h14M1 6h14M10 6v9" stroke="#8a9098" /><path d="M4 8v5l3-2.500z" fill="#2f9c33" /></svg>
      </div>
      <div class="panes">
        <div class="tree">
          {#each tree as n}
            <div class="trow l{n.l}">
              {#if n.l}<svg class="tarr" viewBox="0 0 6 10">{#if n.a}<path d="M1 1l4 4-4 4" fill="none" stroke="#aaa" />{/if}</svg>{/if}
              <div class="tcell" class:tsel={n.sel}><svg class="ticon" viewBox="0 0 32 32" preserveAspectRatio="none">{@render icon(n.i)}</svg><span>{n.t}</span></div>
            </div>
          {/each}
          <div class="hbar"><svg viewBox="0 0 6 11"><path d="M6 0v11L0 5.500z" /></svg><div class="thumb"><i></i><i></i><i></i></div><svg class="ra2" viewBox="0 0 6 11"><path d="M0 0v11l6-5.500z" /></svg></div>
        </div>
        <div class="plist">
          <div class="phead"><svg viewBox="0 0 12 6"><path d="M6 0l6 6H0z" fill="#5d9fc4" /></svg><span>策略</span></div>
          {#each policies as p, i}
            <div class="prow">{@render policyIcon(i === 9)}<span class:psel={i === 9}>{p}</span></div>
          {/each}
        </div>
      </div>
      <div class="mstatus"></div>
    </div>
  </section>

  <div class="red rb"></div>
  <div class="red rc"></div>
  <div class="red rd"></div>

  <section class="dlg">
    <div class="dtitle"><span>网络访问: 可远程访问的注册表路径和子路径 属性</span>
      <div class="dbtns">
        <span class="q1"><svg viewBox="0 0 16 20"><path d="M4 7q0-4 4-4t4 4q0 2-2.500 3.500Q8 11.500 8 14" stroke="#44506a" stroke-width="4.600" fill="none" /><path d="M4 7q0-4 4-4t4 4q0 2-2.500 3.500Q8 11.500 8 14M8 16v3" stroke="#fff" stroke-width="2.600" fill="none" /></svg></span>
        <span class="q2"><svg viewBox="0 0 22 18"><path d="M3 2h5l3 3.500L14 2h5l-5 7 5 7h-5l-3-3.500L8 16H3l5-7z" fill="#fff" stroke="#5a3a4a" stroke-width="1.300" /></svg></span>
      </div>
    </div>
    <div class="dclient">
      <div class="tabs"><span class="on">本地策略设置</span><span class="off">说明</span></div>
      <div class="page">
        <div class="ptop">
          <svg viewBox="0 0 66 66"><path d="M19 2l22-1v58l-8 6-14-4z" fill="url(#front)" /><path d="M36 1l22 1v50L37 65z" fill="url(#side)" /><path d="M20 15h14M20 19h14M20 23h14M20 27h14M27 36h8M27 40h8M27 44h8M27 48h8M27 52h8M27 56h8" stroke="#47525c" stroke-width="1.800" /><path d="M20 3h14l-3 4h-9z" fill="#3a4650" /><path d="M19 30h17v4H19z" fill="#eef3f5" /><path d="M46 52l9-7M46 56l9-7M46 48l9-7" stroke="#68706f" /><path d="M4 35h24v24q0 5-6 5H0q4-2 4-6z" fill="#fff5ce" stroke="#d8bd68" /><path d="M8 40h16M8 45h16M8 50h16M8 55h16" stroke="#c8c2a8" /><path d="M0 61h20v4H0z" fill="#e7c757" /></svg>
          <span>网络访问<i class="colon">:</i>可远程访问的注册表路径和子路径</span>
        </div>
        <div class="edit">
          <div class="erow">
            <div class="etext"><div class="lines">{#each paths as p}<div><span>{p}</span></div>{/each}</div></div>
            <div class="vbar"><svg viewBox="0 0 11 7"><path d="M5.500 0L11 7H0z" /></svg><div class="vthumb"><i></i><i></i><i></i><i></i></div><svg class="dn" viewBox="0 0 11 7"><path d="M5.500 7L11 0H0z" /></svg></div>
          </div>
          <div class="ebar"><svg viewBox="0 0 6 11"><path d="M6 0v11L0 5.500z" /></svg><div class="thumb"><i></i><i></i><i></i></div><svg class="ra2" viewBox="0 0 6 11"><path d="M0 0v11l6-5.500z" /></svg></div>
        </div>
      </div>
      <div class="btns"><button class="ok">确定</button><button>取消</button><button class="dis">应用<em>(A)</em></button></div>
    </div>
  </section>
</div>

<style>
  :global(body) { margin: 0; background: #fff; }
  * { box-sizing: border-box; }
  .defs { position: absolute; }
  svg { display: block; flex: none; }
  .screen { position: relative; width: 2532px; height: 1666px; overflow: hidden; display: flex; flex-direction: column; background: #fcfcfc; font: 24px/1.2 "Noto Sans", "Noto Sans CJK SC", sans-serif; color: #000; white-space: nowrap; }

  .mac { height: 75px; flex: none; display: grid; grid-template-columns: 1fr auto 1fr; align-items: center; background: linear-gradient(#e6e6e6, #dedede 10%, #c9c9c9); border-bottom: 1px solid #9e9c9a; border-radius: 10px 10px 0 0; }
  .mac h1 { margin: 0; font: 400 29px/1 Inter, sans-serif; letter-spacing: .4px; color: #424242; padding-bottom: 2px; }
  .lights { display: flex; gap: 16px; padding-left: 26px; padding-top: 1px; }
  .lights i { width: 24px; height: 24px; border-radius: 50%; border: 1px solid; }
  .lights .r { background: #fc5753; border-color: #df4744; }
  .lights .y { background: #fdbc40; border-color: #de9f34; }
  .lights .g { background: #2cc745; border-color: #27aa35; }
  .lights .n { background: #cacaca; border-color: #a9a9a9; }
  .mac-icons { display: flex; justify-content: flex-end; gap: 16.2px; padding-right: 15px; }
  .mi { width: 36px; height: 36px; }

  .glass { position: relative; height: 86px; flex: none; background: linear-gradient(180deg, transparent 60%, #8fb9e8 100%), linear-gradient(100deg, #5f90ca 0, #2c61ab 7%, #1f5aa8 16%, #2262ae 35%, #226ab4 52%, #2063ab 70%, #1b5595 80%, #2e6ba5 88%, #25609e 94%, #6f9cca 100%); display: flex; flex-direction: column; border-bottom: 1px solid #4a5d77; overflow: hidden; }
  .aero { position: absolute; left: 0; top: 0; width: 560px; height: 86px; filter: blur(5px); }
  .caption { height: 45px; display: flex; justify-content: flex-end; padding-right: 3px; }
  .winbtns { display: flex; height: 39px; border: 2px solid #a9c8e6; border-top: 0; border-radius: 0 0 6px 6px; outline: 1px solid #1c3d6b; background: rgba(255, 255, 255, .06); }
  .winbtns span { display: flex; align-items: center; justify-content: center; border-right: 1px solid #a9c8e6; }
  .winbtns .b1 { width: 57px; padding-top: 10px; } .winbtns .b2 { width: 54px; } .winbtns .b3 { width: 94px; border: 0; background: rgba(255, 255, 255, .15); }
  .b1 svg { width: 22px; } .b2 svg { width: 22px; } .b3 svg { width: 24px; height: 20px; }
  .addrrow { position: relative; display: flex; height: 38px; }
  .navs { width: 88px; height: 38px; }
  .addr, .search { height: 38px; border: 1px solid #3e5a80; border-bottom-color: #9ab; background: rgba(240, 250, 255, .86); box-shadow: 0 0 0 1px rgba(200, 225, 250, .5); display: flex; align-items: center; }
  .addr { width: 457px; padding-left: 3px; color: #1c1c1c; }
  .aicon { width: 32px; height: 32px; }
  .chev { width: 18px; margin: -6px 8px 0 11px; font-size: 20px; }
  .p1 { width: 131px; }
  .sep { width: 8px; height: 12px; margin: 0 14px 0 1px; }
  .drop { width: 12px; height: 7px; margin-left: auto; margin-right: 5px; }
  .refresh { width: 33px; height: 36px; border-left: 1px solid #5e7698; display: flex; align-items: center; justify-content: center; }
  .refresh svg { width: 24px; }
  .search { flex: 1; margin-left: 5px; margin-right: 2px; padding: 0 5px 0 12px; justify-content: space-between; background: #edf9ff; }
  .search em { color: #6b7075; } .search svg { width: 20px; height: 20px; }

  .toolbar { height: 62px; flex: none; display: flex; align-items: center; background: linear-gradient(#fbfdff, #e8f1fb 50%, #dce6f4 50%, #dde8f6 92%, #eaf3fb); border-bottom: 2px solid #a3b5d0; color: #1e395b; padding: 2px 30px 0 36px; }
  .tiny { width: 8px; height: 5px; margin-left: 8px; }
  .openi { width: 32px; height: 28px; margin-left: 58px; }
  .open { margin-left: 9px; } .burn { margin-left: 59px; }
  .views { width: 32px; height: 32px; margin-left: auto; } .tiny.v { margin-left: 17px; }
  .pane { width: 32px; height: 28px; margin-left: 40px; } .helpi { width: 32px; height: 32px; margin-left: 40px; }

  .content { flex: 1; min-height: 0; display: flex; }
  .side { width: 315px; border-right: 2px solid #d7e3f1; padding: 11px 2px 0; }
  .nrow { height: 39px; display: flex; align-items: center; gap: 6px; padding-left: 44px; }
  .nrow.root { padding-left: 34px; gap: 5px; } .nrow svg { width: 32px; height: 32px; }
  .nrow.sel { border: 1px solid #d9d9d9; border-radius: 4px; background: linear-gradient(#f8f8f8, #e6e6e6); padding-left: 34px; }
  .list { flex: 1; padding-left: 31px; }
  .thead { height: 65px; display: flex; color: #4c607a; line-height: 56px; padding-left: 6px; }
  .c0 { width: 543px; display: flex; } .c0 svg { width: 12px; height: 6px; margin: 3px 0 0 211px; }
  .thead .c { width: 255px; height: 56px; padding-left: 11px; border-left: 2px solid #e2ebf5; } .thead .c4 { width: 171px; }
  .frow { height: 42px; display: flex; align-items: center; border: 1px solid transparent; padding-left: 7px; }
  .frow.sel { border-color: #d9d9d9; border-radius: 4px; background: linear-gradient(#f8f8f8, #e6e6e6); width: 1230px; }
  .ficon { width: 32px; height: 32px; }
  .fname { width: 514px; margin-left: 8px; }
  .wide { letter-spacing: .32px; }
  .fd { width: 255px; color: #456; } .fk { width: 255px; color: #456; } .fs { width: 130px; text-align: right; color: #456; }

  .details { height: 105px; flex: none; display: flex; background: #f1f4fc; border-top: 2px solid #c9d8ea; color: #1e395b; padding-left: 37px; }
  .big { width: 92px; height: 92px; margin-top: 4px; }
  .dc { display: flex; flex-direction: column; line-height: 36px; padding-top: 10px; } .dc b { font-weight: 400; font-size: 26px; color: #000; margin-top: -2px; margin-bottom: 2px; }
  .lab { color: #5a6779; } .d1 { width: 167px; margin-left: 24px; } .d2 { width: 103px; text-align: right; } .d3 { margin-left: 10px; width: 272px; letter-spacing: .3px; } .d4 { width: 103px; } .d5 { margin-left: 10px; letter-spacing: .3px; }

  .task { position: relative; height: 71px; flex: none; display: flex; align-items: center; border-top: 1px solid #123a63; box-shadow: inset 0 2px 0 rgba(170, 215, 245, .7); background: linear-gradient(108deg, transparent 5.600%, rgba(150, 220, 215, .7) 6.300%, transparent 7%), linear-gradient(90deg, #1b5f98 0, #1f6fac 4.500%, #3a97cb 6.500%, #2b86c0 9%, #3f9fd2 22%, #3c9ed2 31%, #2c89c9 34%, #2280c4 40%, #1f78be 55%, #1c6cb4 72%, #1f5fa8 82.800%, #174a80 83.600%, #15406f 100%); }
  .streak { position: absolute; left: 1617px; top: 0; width: 400px; height: 71px; filter: blur(3px); }
  .orb { width: 54px; height: 54px; margin-left: 13px; } .iei { width: 62px; height: 62px; margin-left: 35px; } .exi { width: 58px; height: 58px; margin-left: 33px; } .chi { width: 61px; height: 61px; margin-left: 35px; }
  .tb { height: 70px; width: 87px; display: flex; align-items: center; justify-content: center; border: 1px solid #1a4c76; box-shadow: inset 0 0 0 1px #bfe0f2; border-radius: 3px; background: linear-gradient(135deg, #8bc3e2, #63abd6 50%, #5aa6d4); }
  .t1 { margin-left: 18px; margin-right: 6px; box-shadow: inset 0 0 0 1px #bfe0f2, 3px 0 0 -1px #6ab0da, 4px 0 0 -1px #1a4c76; } .t1 svg { width: 64px; height: 56px; } .t2 { width: 91px; background: linear-gradient(160deg, #e0f0f8, #a9d3ea 60%, #b8dff2); } .t2 svg { width: 64px; height: 66px; margin-left: 8px; }
  .tray { position: relative; margin-left: auto; display: flex; align-items: center; height: 70px; }
  .tray svg { width: 34px; height: 34px; margin-right: 14px; } .tray .up { width: 16px; height: 10px; margin-right: 30px; } .tray svg:nth-child(4) { margin-right: 18px; }
  .clk { width: 140px; margin-left: -5px; margin-right: 2px; display: flex; flex-direction: column; align-items: center; color: #fff; line-height: 33px; font-size: 24.500px; padding-top: 2px; }
  .show { width: 14px; height: 69px; border: 1px solid #6f95bd; background: linear-gradient(#5e88b2, #1b477a 50%, #1d4b80); }

  .ime { position: absolute; right: 0; top: 1552px; width: 155px; height: 42px; display: flex; align-items: center; border-top: 1px solid #777; background: linear-gradient(#cacaca, #8b8d8d 26%, #545858 27%, #4f5353); color: #fff; font: 24px "Liberation Serif", serif; padding-left: 4px; }
  .ime span { display: inline-block; font-size: 23px; transform: scaleX(.75); transform-origin: left; width: 24px; margin-left: 11px; }
  .dots { width: 14px; height: 34px; background: repeating-linear-gradient(#222 0 4px, transparent 4px 10px); mask: repeating-linear-gradient(90deg, #000 0 4px, transparent 4px 5px); }
  .kb { width: 32px; height: 24px; margin-left: 10px; } .q { width: 29px; height: 29px; margin-left: 9px; margin-top: -3px; } .m { width: 8px; height: 26px; margin-left: 9px; margin-top: 2px; }

  .red { position: absolute; border: 6px solid #ff0a1c; border-radius: 11px; }
  .ra { left: 383px; top: 404px; width: 181px; height: 54px; }
  .rb { left: 797px; top: 441px; width: 147px; height: 42px; }
  .rc { left: 818px; top: 542px; width: 142px; height: 44px; }
  .rd { left: 1039px; top: 692px; width: 507px; height: 83px; }

  .mmc { position: absolute; left: 774px; top: 252px; width: 1436px; height: 935px; border: 2px solid #5e5f61; border-radius: 10px; background: rgba(253, 254, 254, .6); backdrop-filter: blur(5px); box-shadow: 0 3px 14px rgba(0, 0, 0, .45); padding: 0 11px 11px; display: flex; flex-direction: column; }
  .mtitle { height: 53px; flex: none; display: flex; align-items: center; }
  .mlogo { width: 28px; height: 33px; margin-left: 2px; margin-top: -1px; } .mtitle > span { margin-left: 6px; }
  .mbtn { width: 208px; height: 38px; margin-left: auto; align-self: flex-start; }
  .mclient { flex: 1; min-height: 0; display: flex; flex-direction: column; border: 1px solid #6e7378; background: #f0edec; }
  .menu { height: 39px; flex: none; display: flex; padding-left: 9px; line-height: 39px; background: linear-gradient(#f4f5fa, #e0e3f0 25%, #d3d8ec 26%, #d8dcee); border-bottom: 1px solid #a4a4aa; }
  .menu span { width: 93px; letter-spacing: .4px; } .menu span:nth-child(2) { width: 97px; } .menu span:nth-child(3) { width: 96px; }
  .mtools { height: 23px; flex: none; display: flex; align-items: center; background: linear-gradient(#e3e5f0, #d2d7ea); border-bottom: 1px solid #aaa; margin-bottom: 6px; padding-left: 3px; gap: 5px; }
  .mtools svg { width: 16px; height: 16px; } .mtools .ar { width: 18px; } .mtools i { width: 1px; height: 18px; background: #888; }
  .press { width: 24px; border: 2px solid #66686e; border-radius: 4px; padding: 1px 2px; background: #c9ccd8; height: 21px; margin-left: -1px; } .mtools .g3 { margin-left: 3px; } .mtools .g2 { margin-left: 2px; } .mtools .gn { margin-left: -4px; }
  .panes { flex: 1; min-height: 0; display: flex; gap: 3px; }
  .tree { width: 244px; border: 2px solid #7f848c; border-left: 1px solid #7f848c; background: #fff; display: flex; flex-direction: column; overflow: hidden; }
  .trow { height: 34px; flex: none; display: flex; align-items: center; } .trow.l0 { padding-left: 4px; } .trow.l1 { padding-left: 10px; } .trow.l2 { padding-left: 29px; }
  .tarr { width: 6px; height: 10px; margin-right: 5px; }
  .tcell { display: flex; align-items: center; height: 32px; } .tsel { background: #ededed; box-shadow: 0 0 0 1px #d5d5d5; padding-right: 4px; }
  .ticon { width: 18px; height: 17px; margin-right: 4px; margin-top: -2px; } .l0 .ticon { width: 15px; height: 18px; margin-right: 4px; margin-left: 1px; }
  .hbar, .ebar { margin-top: auto; height: 33px; flex: none; display: flex; align-items: center; background: #efefef; }
  .hbar svg, .ebar svg { width: 6px; height: 11px; fill: #333; margin-left: 14px; } .hbar svg { margin-left: 12px; }
  .thumb { width: 118px; height: 32px; margin-left: 17px; display: flex; gap: 2px; align-items: center; justify-content: center; border: 1px solid #8f8f8f; border-radius: 3px; background: linear-gradient(#f3f3f3, #e6e6e8 45%, #d0d0d3 46%, #dadadc); } .thumb i { width: 4px; height: 11px; background: linear-gradient(90deg, #555 60%, #fff); }
  .hbar .ra2, .ebar .ra2 { margin-left: auto; margin-right: 15px; }
  .plist { flex: 1; border: 2px solid #7f848c; border-right: 0; background: #fff; overflow: hidden; }
  .phead { height: 38px; padding-left: 5px; background: linear-gradient(#f3f9fc, #f1f8fc 26%, #def0f8 27%, #e2f2f9); border-bottom: 1px solid #7ec8e8; margin-bottom: 1px; } .phead svg { width: 12px; height: 6px; margin-left: 344px; } .phead span { display: block; line-height: 30px; }
  .phead svg { padding-top: 0; transform: translateY(3px); }
  .prow { height: 35px; display: flex; align-items: center; padding-left: 5px; } .pi { width: 13px; height: 16px; margin-right: 1px; margin-top: -3px; } .prow span { line-height: 35px; width: 1130px; padding-left: 2px; } .psel { background: #efefef; }
  .mstatus { height: 36px; flex: none; }

  .dlg { position: absolute; left: 1591px; top: 256px; width: 847px; height: 935px; border: 2px solid #1a2230; border-radius: 9px; background: linear-gradient(180deg, rgba(179, 215, 250, .82) 0, rgba(181, 216, 250, .82) 3%, rgba(214, 234, 252, .82) 12%, rgba(232, 243, 254, .85) 29%, rgba(178, 214, 250, .82) 29.200%, rgba(178, 214, 250, .82) 100%); backdrop-filter: blur(4px); box-shadow: inset 0 0 0 2px rgba(235, 250, 255, .9), 0 5px 20px 2px rgba(0, 0, 0, .75); padding: 0 10px 10px; display: flex; flex-direction: column; }
  .dtitle { height: 53px; flex: none; display: flex; align-items: center; justify-content: space-between; } .dtitle > span { padding-top: 1px; text-shadow: 0 0 8px #fff, 0 0 12px #fff, 0 0 16px #fff; letter-spacing: -.05px; padding-left: 1px; }
  .dbtns { align-self: flex-start; display: flex; height: 38px; border: 2px solid #4f6784; border-top: 0; border-radius: 0 0 6px 6px; overflow: hidden; } .dbtns span { display: flex; align-items: center; justify-content: center; } .q1 { width: 57px; background: linear-gradient(#d0e0f0, #b7cde4 48%, #86a5c8 50%, #a9c6e4); border-right: 1px solid #44566e; } .q2 { width: 94px; background: linear-gradient(#e89c92, #dc7668 46%, #c43a25 50%, #cf4a31 80%, #e68a70); } .q1 svg { width: 16px; height: 20px; } .q2 svg { width: 22px; height: 18px; }
  .dclient { flex: 1; min-height: 0; border: 2px solid #5b7083; background: #f0f0f0; padding: 11px 12px 0 10px; display: flex; flex-direction: column; font-family: "Liberation Serif", "Noto Sans CJK SC", serif; font-weight: 300; }
  .tabs { height: 32px; display: flex; align-items: flex-end; flex: none; } .tabs span { border: 1px solid #8c8f9b; border-bottom: 0; }
  .on { width: 160px; height: 33px; line-height: 32px; background: #fff; padding-left: 8px; margin-bottom: -1px; z-index: 1; } .off { width: 81px; height: 30px; line-height: 33px; padding-left: 5px; background: linear-gradient(#f3f3f3, #ececec 30%, #dadada 31%, #d6d6d6); margin-left: -1px; }
  .page { height: 754px; flex: none; background: #fff; border: 1px solid #8c8f9b; padding: 0 0 0 61px; display: flex; flex-direction: column; }
  .ptop { display: flex; height: 155px; padding-top: 21px; } .ptop svg { width: 66px; height: 66px; margin-left: -37px; } .ptop span { margin-left: 31px; line-height: 29px; } .colon { font-style: normal; display: inline-block; width: 24px; padding-left: 3px; }
  .edit { width: 678px; height: 192px; border: 1px solid #b2d3ea; border-top: 2px solid #4a7ba8; background: #fff; display: flex; flex-direction: column; } .erow { height: 154px; display: flex; } .etext { flex: 1; overflow: hidden; padding-left: 1px; }
  .lines { width: 780px; transform: scaleX(.8344); transform-origin: left top; font: 24px/25px "Liberation Mono", monospace; color: #fff; padding-top: 2px; } .lines div { height: 24px; } .lines span { display: inline-block; height: 24px; background: #3399ff; }
  .vbar { width: 33px; margin-right: 1px; background: #efefef; display: flex; flex-direction: column; align-items: center; padding: 14px 0 14px; } .vbar svg { width: 11px; height: 7px; fill: #333; } .vthumb { width: 32px; height: 45px; margin-top: 13px; border: 1px solid #8f8f8f; border-radius: 3px; background: linear-gradient(90deg, #f3f3f3, #e6e6e8 45%, #d0d0d3 46%, #dadadc); display: flex; flex-direction: column; gap: 2px; align-items: center; justify-content: center; } .vthumb i { width: 12px; height: 2px; background: #777; } .vbar .dn { margin-top: auto; }
  .ebar { height: 33px; margin-right: 1px; margin-top: 0; } .ebar .thumb { width: 413px; margin-left: 16px; } .ebar .ra2 { margin-right: 48px; }
  .btns { display: flex; justify-content: flex-end; gap: 14px; padding-top: 14px; }
  button { width: 148px; height: 41px; padding: 0; border: 2px solid #707070; border-radius: 4px; background: linear-gradient(#f2f2f2, #ebebeb 48%, #dddddd 50%, #cfcfcf); font: inherit; color: #000; box-shadow: inset 0 0 0 1px #fcfcfc; } .ok { border-color: #3c7fb1; box-shadow: inset 0 0 0 2px #48c8f5; background: linear-gradient(#eef2f4, #e2e8eb 48%, #d2dade 50%, #c6cfd3); } .dis { background: #f4f4f4; border-color: #adb2b5; color: #838383; } button em { font: 20px "Liberation Mono", monospace; }
</style>
